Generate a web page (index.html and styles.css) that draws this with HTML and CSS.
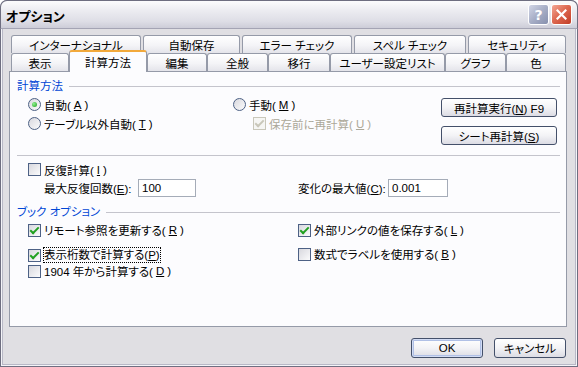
FILE: index.html
```html
<!DOCTYPE html>
<html lang="ja">
<head>
    <meta charset="UTF-8">
    <title>オプション</title>
    <link rel="stylesheet" href="styles.css">
</head>
<body>
    <div class="window">
        <div class="titlebar">
            <span class="title">オプション</span>
            <div class="caption-btns">
                <span class="cbtn help">?</span>
                <span class="cbtn close">
                    <svg width="11" height="11" viewBox="0 0 11 11"><path d="M1.5 1.5 L9.5 9.5 M9.5 1.5 L1.5 9.5" stroke="#fff" stroke-width="2.2" stroke-linecap="square"/></svg>
                </span>
            </div>
        </div>

        <div class="content">
            <div class="tabs">
                <div class="tab-row back">
                    <div class="tab">インターナショナル</div>
                    <div class="tab">自動保存</div>
                    <div class="tab">エラー チェック</div>
                    <div class="tab">スペル チェック</div>
                    <div class="tab">セキュリティ</div>
                </div>
                <div class="tab-row front">
                    <div class="tab">表示</div>
                    <div class="tab active">計算方法</div>
                    <div class="tab">編集</div>
                    <div class="tab">全般</div>
                    <div class="tab">移行</div>
                    <div class="tab">ユーザー設定リスト</div>
                    <div class="tab">グラフ</div>
                    <div class="tab">色</div>
                </div>
            </div>

            <div class="panel">
                <div class="group-head">計算方法</div>
                <div class="calc">
                    <div class="calc-left">
                        <label class="opt"><span class="radio on"></span>自動(<u>A</u>)</label>
                        <label class="opt"><span class="radio"></span>テーブル以外自動(<u>T</u>)</label>
                    </div>
                    <div class="calc-mid">
                        <label class="opt"><span class="radio"></span>手動(<u>M</u>)</label>
                        <label class="opt sub disabled"><span class="check on"></span>保存前に再計算(<u>U</u>)</label>
                    </div>
                    <div class="calc-btns">
                        <button class="btn wide">再計算実行(<u>N</u>) F9</button>
                        <button class="btn wide">シート再計算(<u>S</u>)</button>
                    </div>
                </div>

                <div class="sep"></div>

                <div class="iter">
                    <label class="opt"><span class="check"></span>反復計算(<u>I</u>)</label>
                    <div class="iter-fields">
                        <div class="field field-left">
                            <span class="field-label">最大反復回数(<u>E</u>):</span>
                            <span class="input">100</span>
                        </div>
                        <div class="field">
                            <span class="field-label short">変化の最大値(<u>C</u>):</span>
                            <span class="input wide-input">0.001</span>
                        </div>
                    </div>
                </div>

                <div class="group-head book-head">ブック オプション</div>
                <div class="book">
                    <div class="book-col left">
                        <label class="opt row"><span class="check on"></span>リモート参照を更新する(<u>R</u>)</label>
                        <label class="opt row second"><span class="check on"></span><span class="focus">表示桁数で計算する(<u>P</u>)</span></label>
                        <label class="opt row"><span class="check"></span>1904 年から計算する(<u>D</u>)</label>
                    </div>
                    <div class="book-col">
                        <label class="opt row"><span class="check on"></span>外部リンクの値を保存する(<u>L</u>)</label>
                        <label class="opt row second-r"><span class="check"></span>数式でラベルを使用する(<u>B</u>)</label>
                    </div>
                </div>
            </div>

            <div class="footer">
                <button class="btn default">OK</button>
                <button class="btn">キャンセル</button>
            </div>
        </div>
    </div>
</body>
</html>
```

FILE: styles.css
```css
* {
    box-sizing: border-box;
}
body {
    margin: 0;
    background: #fff;
    font-family: "Liberation Sans", "Noto Sans CJK JP", sans-serif;
    font-size: 11.5px;
    font-feature-settings: "palt";
    text-autospace: no-autospace;
    color: #000;
}
.window {
    width: 578px;
    height: 367px;
    display: flex;
    flex-direction: column;
    background: #e0dfe3;
    border-radius: 7px 7px 0 0;
    overflow: hidden;
    box-shadow: inset 0 0 0 1px #6e6e80, inset 0 0 0 2px #f4f4f8, inset 0 0 0 3px #b8b8c6;
}
.titlebar {
    height: 29px;
    flex-shrink: 0;
    display: flex;
    align-items: center;
    justify-content: space-between;
    padding: 0 5px 0 5px;
    border: 1px solid #6e6e80;
    border-bottom-color: #a4a4b4;
    border-radius: 7px 7px 0 0;
    background: linear-gradient(#fcfcfd, #ececf1 35%, #dedee6 75%, #cdcdd8);
}
.title {
    font-size: 13px;
    font-weight: bold;
    padding-top: 2px;
}
.caption-btns {
    display: flex;
    gap: 2px;
}
.cbtn {
    width: 21px;
    height: 21px;
    display: flex;
    align-items: center;
    justify-content: center;
    border: 1px solid #fff;
    border-radius: 3px;
    color: #fff;
    font-family: "DejaVu Sans", sans-serif;
    font-size: 14px;
    font-weight: bold;
}
.help {
    background: linear-gradient(135deg, #d2d6e6, #a7aec6 50%, #8790ae);
}
.close {
    background: linear-gradient(135deg, #f4a896, #de6a52 45%, #c23c26);
}

.content {
    flex: 1;
    display: flex;
    flex-direction: column;
    padding: 6px 11px 0 9px;
}

/* tabs */
.tabs {
    margin-left: 2px;
}
.tab-row {
    display: grid;
    grid-template-rows: 18px;
}
.back {
    grid-template-columns: 130px 97px 110px 112px 98px;
    column-gap: 2px;
}
.front {
    grid-template-columns: 58px 78px 60px 61px 62px 115px 61px 60px;
}
.tab {
    height: 18px;
    display: flex;
    align-items: center;
    justify-content: center;
    border: 1px solid #959aa8;
    border-bottom: none;
    border-radius: 3px 3px 0 0;
    background: linear-gradient(#ffffff, #f4f4f7 55%, #e4e4ea);
    white-space: nowrap;
}
.tab.active {
    position: relative;
    z-index: 1;
    height: 22px;
    margin-top: -3px;
    border-top: 2px solid #f2a93b;
    background: #fcfcfe;
}

.panel {
    height: 256px;
    border: 1px solid #959aa8;
    background: #fcfcfe;
    padding: 7px 6px 0 7px;
}
.group-head {
    height: 14px;
    display: flex;
    align-items: center;
    gap: 6px;
    color: #0046d5;
    line-height: 14px;
}
.group-head::after {
    content: "";
    flex: 1;
    height: 1px;
    background: #c4c4cc;
}
.calc {
    display: flex;
    margin-top: 2px;
    height: 50px;
}
.calc-left {
    width: 205px;
    margin-left: 11px;
}
.calc-mid {
    width: 208px;
}
.calc-btns {
    display: flex;
    flex-direction: column;
    gap: 9px;
    padding-top: 3px;
}
.opt {
    display: flex;
    align-items: center;
    gap: 3px;
    height: 19px;
    white-space: nowrap;
}
.opt.sub {
    padding-left: 20px;
}
.opt.disabled {
    color: #aca899;
}
.radio {
    position: relative;
    width: 13px;
    height: 13px;
    flex-shrink: 0;
    border: 1px solid #4d6185;
    border-radius: 50%;
    background: linear-gradient(135deg, #d8d8de, #fbfbfc);
}
.radio.on::after {
    content: "";
    position: absolute;
    left: 3px;
    top: 3px;
    width: 5px;
    height: 5px;
    border-radius: 50%;
    background: radial-gradient(circle at 35% 35%, #8ef08e, #21a121);
}
.check {
    position: relative;
    width: 13px;
    height: 13px;
    flex-shrink: 0;
    border: 1px solid #4d6185;
    background: linear-gradient(135deg, #d8d8de, #fbfbfc);
}
.check.on::after {
    content: "";
    position: absolute;
    left: 3px;
    top: 0;
    width: 3px;
    height: 7px;
    border: solid #21a121;
    border-width: 0 2px 2px 0;
    transform: rotate(45deg);
}
.disabled .check {
    border-color: #c9c7ba;
    background: #f6f6f4;
}
.disabled .check.on::after {
    border-color: #c9c7ba;
}

.btn {
    height: 20px;
    width: 72px;
    padding: 0;
    font: inherit;
    font-feature-settings: "palt";
    text-autospace: no-autospace;
    color: #000;
    border: 1px solid #44506a;
    border-radius: 3px;
    background: linear-gradient(#ffffff, #f3f3f6 50%, #dcdce4);
}
.btn.wide {
    width: 116px;
    height: 19px;
}
.btn.default {
    box-shadow: inset 0 0 0 1px #d2dcf4, inset 0 0 0 2px #b0c0e6;
}

.sep {
    height: 1px;
    margin-top: 10px;
    background: #c4c4cc;
}
.iter {
    margin-top: 4px;
    margin-left: 11px;
}
.iter-fields {
    display: flex;
    margin-left: 16px;
    height: 18px;
}
.field {
    display: flex;
    align-items: center;
}
.field-left {
    width: 254px;
}
.field-label {
    width: 94px;
    white-space: nowrap;
}
.field-label.short {
    width: 90px;
}
.input {
    width: 58px;
    height: 18px;
    padding-left: 3px;
    line-height: 16px;
    border: 1px solid #a5acb8;
    background: #fff;
}
.wide-input {
    width: 60px;
}
.book-head {
    margin-top: 8px;
}
.book {
    display: flex;
    margin-top: 3px;
    margin-left: 11px;
}
.book-col.left {
    width: 270px;
}
.opt.row {
    height: 16px;
}
.opt.second {
    margin-top: 9px;
}
.opt.second-r {
    margin-top: 8px;
}
.focus {
    outline: 1px dotted #000;
    outline-offset: 0;
    line-height: 14px;
}

.footer {
    display: flex;
    justify-content: flex-end;
    gap: 11px;
    margin-top: 11px;
    padding-right: 1px;
}
```
